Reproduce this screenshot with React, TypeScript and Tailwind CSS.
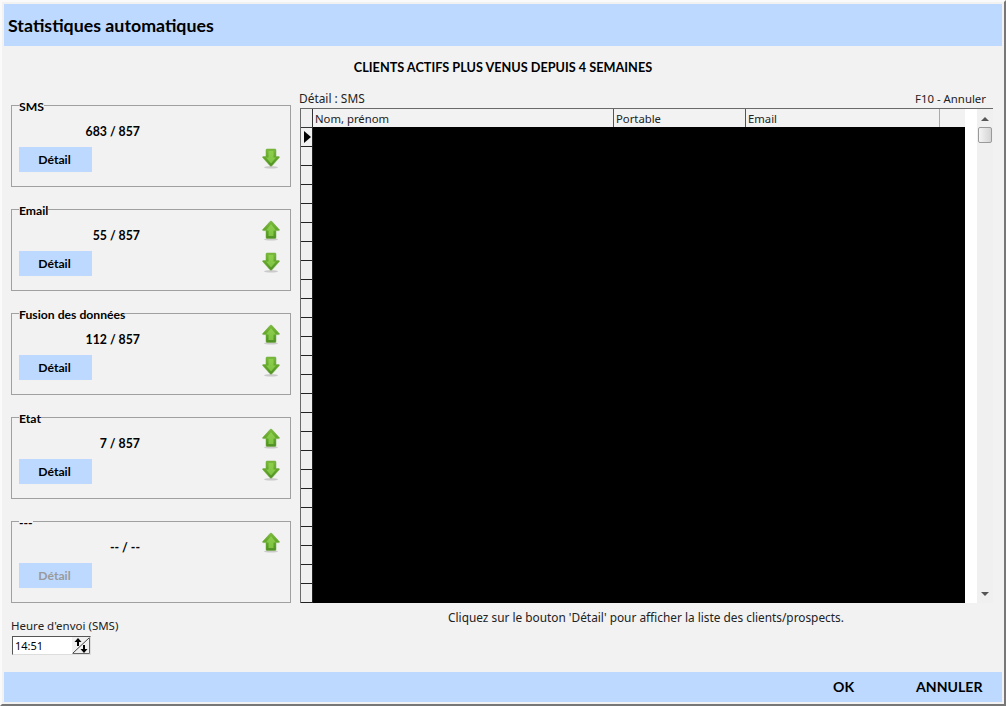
import React from 'react'

const UI = "font-['Noto_Sans','Liberation_Sans',sans-serif]"
const BOLD = "font-['Lato','Noto_Sans',sans-serif] font-bold"

const Arrow = ({ dir }: { dir: 'up' | 'down' }) => {
  const shape =
    dir === 'up'
      ? 'M9 1 Q9.6 1 10.2 1.8 L17.3 9.6 Q17.8 10.6 16.6 10.6 L14 10.6 L14 17.4 Q14 18.4 13 18.4 L5 18.4 Q4 18.4 4 17.4 L4 10.6 L1.4 10.6 Q0.2 10.6 0.7 9.6 L7.8 1.8 Q8.4 1 9 1 Z'
      : 'M5 1 L13 1 Q14 1 14 2 L14 8.6 L16.6 8.6 Q17.8 8.6 17.3 9.6 L10.2 17.6 Q9 18.8 7.8 17.6 L0.7 9.6 Q0.2 8.6 1.4 8.6 L4 8.6 L4 2 Q4 1 5 1 Z'
  const glow =
    dir === 'up'
      ? 'M9 4 L14 10.5 L11.5 10.5 L11.5 16 L6.5 16 L6.5 10.5 L4 10.5 Z'
      : 'M6.5 3 L11.5 3 L11.5 9.5 L14 9.5 L9 15.5 L4 9.5 L6.5 9.5 Z'
  return (
    <svg width="18" height="21" viewBox="0 0 18 21">
      <defs>
        <linearGradient id={`arrow-${dir}`} x1="0" y1="0" x2="0" y2="1">
          <stop offset="0" stopColor="#7dbb3c" />
          <stop offset="0.6" stopColor="#5fa329" />
          <stop offset="1" stopColor="#4f8f22" />
        </linearGradient>
      </defs>
      <ellipse cx="9" cy="19.3" rx="7" ry="1.3" fill="#b9b9b9" opacity="0.7" />
      <path d={shape} fill={`url(#arrow-${dir})`} stroke="#6aa838" strokeWidth="0.5" />
      <path d={glow} fill="#9be05a" opacity="0.6" />
    </svg>
  )
}

type Stat = { title: string; value: string; up: boolean; down: boolean; disabled?: boolean }

const stats: Stat[] = [
  { title: 'SMS', value: '683 / 857', up: false, down: true },
  { title: 'Email', value: '55 / 857', up: true, down: true },
  { title: 'Fusion des données', value: '112 / 857', up: true, down: true },
  { title: 'Etat', value: '7 / 857', up: true, down: true },
  { title: '---', value: '-- / --', up: true, down: false, disabled: true },
]

const StatBox = ({ stat }: { stat: Stat }) => (
  <div className="relative flex h-[82px] justify-between border border-[#a0a0a0] pl-[7px] pr-[10px]">
    <span className={`${BOLD} absolute left-[7px] top-[-6px] bg-[#f2f2f2] text-[12.2px] leading-[14px] text-black`}>
      {stat.title}
    </span>
    <div className="flex flex-col">
      <div className={`${BOLD} mt-[17px] h-[24px] w-[121px] text-right text-[12.3px] leading-[18px] text-black`}>
        {stat.value}
      </div>
      <button
        className={`${BOLD} h-[25px] w-[73px] bg-[#bdd9ff] pt-[2px] pr-[2px] text-[12.2px] ${stat.disabled ? 'text-[#9a9a9a]' : 'text-black'}`}
      >
        Détail
      </button>
    </div>
    <div className="flex w-[18px] flex-col pt-[10px]">
      <div className="h-[32px]">{stat.up && <Arrow dir="up" />}</div>
      <div className="h-[21px]">{stat.down && <Arrow dir="down" />}</div>
    </div>
  </div>
)

const rows = Array.from({ length: 25 })

const Grid = () => (
  <div className="flex h-[495px] border-t border-t-[#6a6a6a]">
    {/* row headers */}
    <div className="flex w-[13px] shrink-0 flex-col overflow-hidden border-l border-l-[#6a6a6a] bg-[#f0f0f0]">
      <div className="h-[19px] shrink-0 border-r border-b border-[#333]" />
      {rows.map((_, i) => (
        <div key={i} className="flex h-[19px] shrink-0 items-center border-r border-b border-[#222] pl-[3px]">
          {i === 0 && <div className="h-0 w-0 border-y-[6px] border-l-[7px] border-y-transparent border-l-black" />}
        </div>
      ))}
    </div>
    <div className="flex min-w-0 flex-1 flex-col">
      <div className={`${UI} flex h-[18px] shrink-0 text-[11.3px] leading-[19px] text-[#222]`}>
        <div className="w-[301px] border-r border-[#555] bg-[#f2f2f2] pl-[2px]">Nom, prénom</div>
        <div className="w-[132px] border-r border-[#555] bg-[#f2f2f2] pl-[2px]">Portable</div>
        <div className="w-[194px] border-r border-[#aaa] bg-[#f2f2f2] pl-[2px]">Email</div>
        <div className="w-[25px] bg-[#f2f2f2]" />
        <div className="flex-1 bg-white" />
      </div>
      <div className="flex min-h-0 flex-1">
        <div className="w-[652px] bg-black" />
        <div className="flex-1 bg-white" />
      </div>
    </div>
    {/* scrollbar */}
    <div className="flex w-[16px] shrink-0 flex-col items-center bg-[#f0f0f0]">
      <div className="mt-[8px] h-0 w-0 border-x-[4px] border-b-[4px] border-x-transparent border-b-[#555]" />
      <div className="mt-[6px] h-[16px] w-[14px] rounded-[2px] border border-[#9a9a9a] bg-gradient-to-r from-[#f4f4f4] to-[#d4d4d4]" />
      <div className="mt-auto mb-[7px] h-0 w-0 border-x-[4px] border-t-[4px] border-x-transparent border-t-[#555]" />
    </div>
  </div>
)

const TimeInput = () => (
  <div className="flex h-[19px] w-[79px] border border-t-[#555] border-l-[#555] border-r-[#ddd] border-b-[#ddd] bg-white">
    <span className={`${UI} flex-1 pl-[2px] text-[11px] leading-[17px] text-black`}>14:51</span>
    <svg width="18" height="17" viewBox="0 0 18 17" className="bg-[#f0f0f0]">
      <path d="M1 16 L17 1" stroke="#444" strokeWidth="1" />
      <path d="M0.5 16.5 H17.5 V0.5" stroke="#666" fill="none" />
      <path d="M6 1 L9.5 5 H7 V9 H5 V5 H2.5 Z" fill="#000" />
      <path d="M12 16 L8.5 12 H11 V8 H13 V12 H15.5 Z" fill="#000" />
    </svg>
  </div>
)

export default function App() {
  return (
    <div className="flex h-[706px] w-[1006px] flex-col border-2 border-t-[#fafafa] border-l-[#fafafa] border-r-[#777] border-b-[#777] bg-[#f2f2f2] p-[2px]">
      <header className={`${BOLD} h-[42px] shrink-0 bg-[#bdd9ff] pl-[4px] text-[17.8px] leading-[42px] text-black`}>
        Statistiques automatiques
      </header>

      <main className="flex min-h-0 flex-1 flex-col">
        <h1 className={`${BOLD} mt-[12px] h-[20px] text-center text-[12.7px] leading-[18px] text-black`}>
          CLIENTS ACTIFS PLUS VENUS DEPUIS 4 SEMAINES
        </h1>
        <div className="mt-[9px] flex flex-1 pl-[7px]">
          <div className="w-[280px] shrink-0">
            <div className="mt-[18px] flex flex-col gap-[22px]">
              {stats.map(s => (
                <StatBox key={s.title} stat={s} />
              ))}
            </div>
            <div className={`${UI} mt-[15px] text-[11.5px] leading-[16px] text-[#222]`}>Heure d'envoi (SMS)</div>
            <div className="ml-[1px] mt-[2px]">
              <TimeInput />
            </div>
          </div>

          <div className="ml-[8px] w-[694px] shrink-0">
            <div className={`${UI} flex h-[21px] items-center justify-between pt-[2px] pr-[7px] text-[11.9px] text-[#222]`}>
              <span>Détail : SMS</span>
              <span className="text-[11.4px]">F10 - Annuler</span>
            </div>
            <div className="ml-[1px]">
              <Grid />
            </div>
            <p className={`${UI} mt-[6px] text-center text-[11.85px] leading-[16px] text-[#222]`}>
              Cliquez sur le bouton 'Détail' pour afficher la liste des clients/prospects.
            </p>
          </div>
        </div>
      </main>

      <footer className={`${BOLD} flex h-[30px] shrink-0 items-center bg-[#bdd9ff] text-[14.1px] text-black`}>
        <span className="ml-[829px]">OK</span>
        <span className="ml-[62px]">ANNULER</span>
      </footer>
    </div>
  )
}
